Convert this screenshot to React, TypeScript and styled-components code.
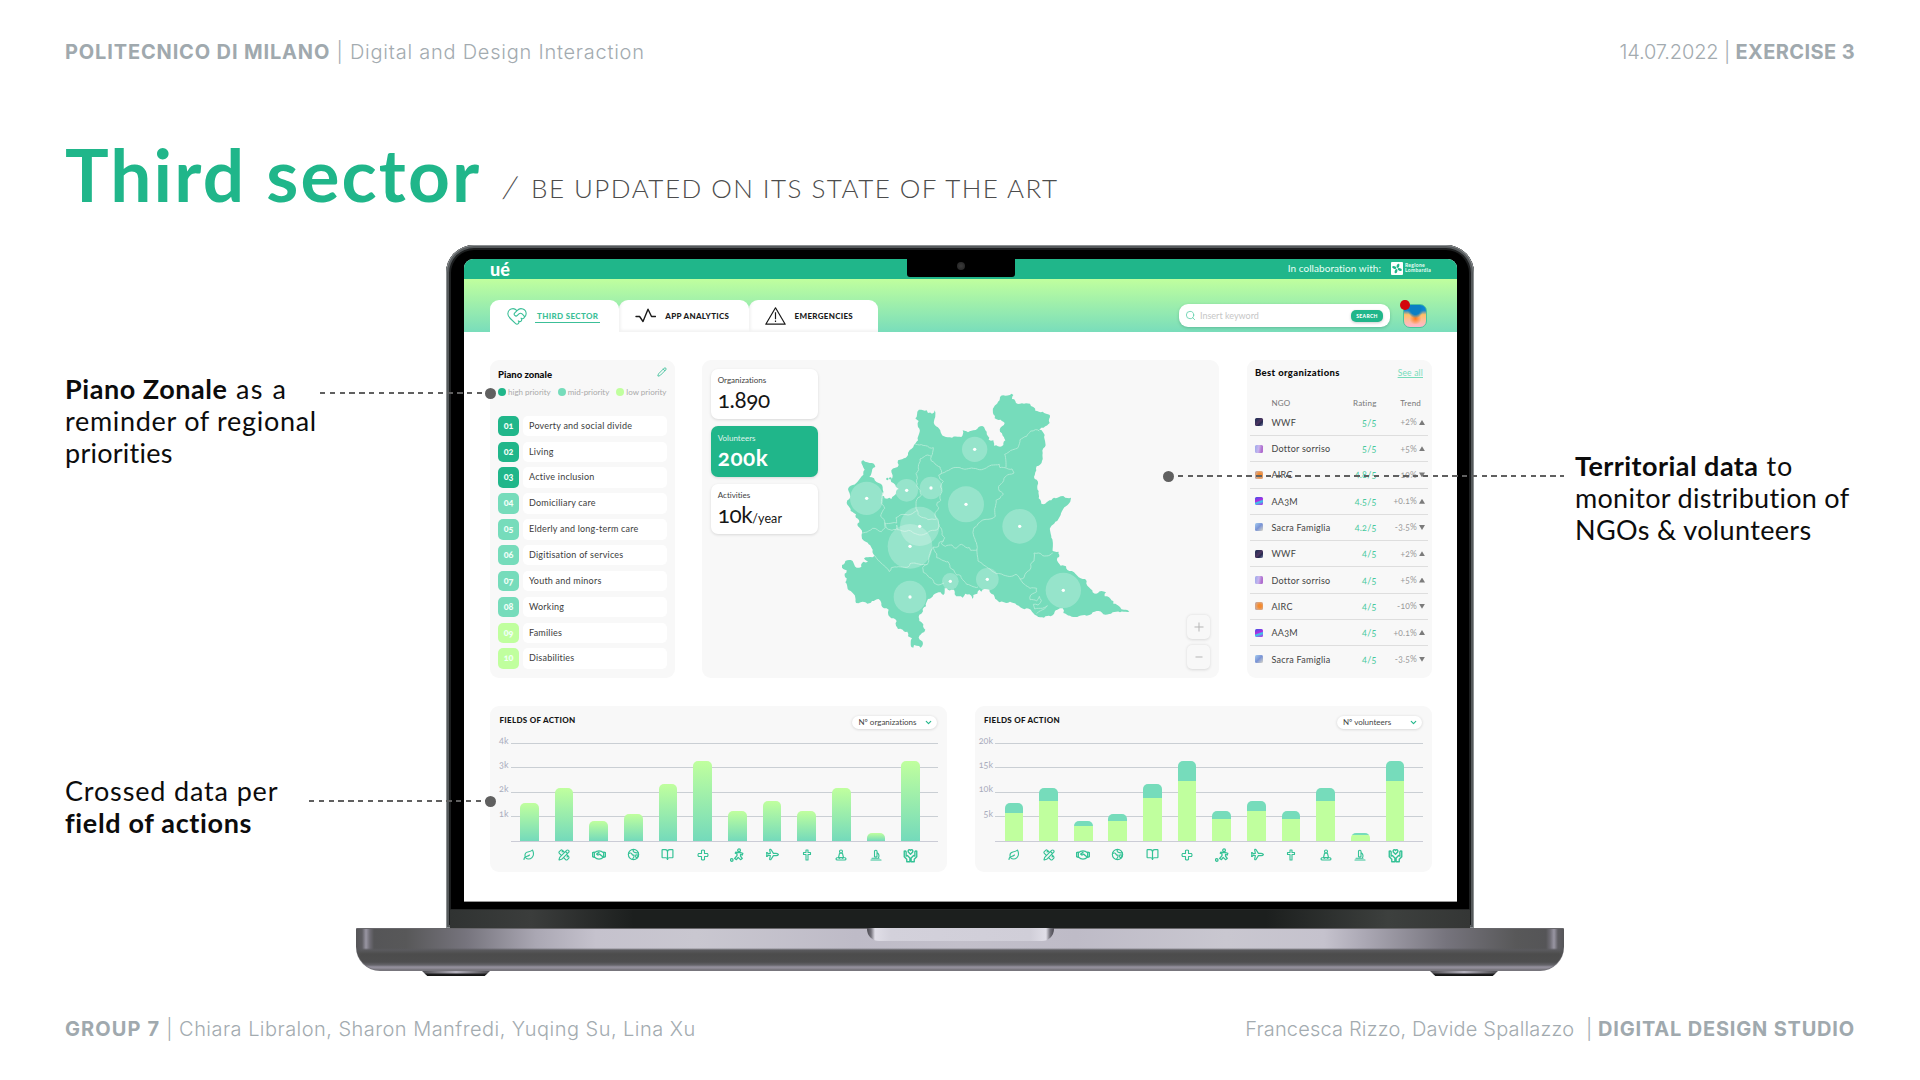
import React from "react";
import styled, { createGlobalStyle, css } from "styled-components";
import { HeartHandshake, Leaf, PencilRuler, BookOpen, Plane, Pencil, Search, ChevronDown } from "lucide-react";

const green = "#20b68a";
const mint = "#76dcbb";
const lime = "#c0ff9e";

const Global = createGlobalStyle`
  * { box-sizing: border-box; }
  body { margin: 0; background: #fff; }
`;

const Slide = styled.main`
  position: relative;
  width: 1920px;
  height: 1080px;
  overflow: hidden;
  background: #fff;
  display: flex;
  flex-direction: column;
  font-family: Lato, "Liberation Sans", sans-serif;
  font-variant-numeric: oldstyle-nums;
  font-variant-ligatures: none;
  color: #111;
`;

const Meta = styled.div<{ $top: number }>`
  margin-top: ${(p) => p.$top}px;
  height: 30px;
  padding: 0 65px;
  display: flex;
  align-items: center;
  justify-content: space-between;
  font: 300 20px/30px Inter, "Liberation Sans", sans-serif;
  font-variant-numeric: lining-nums;
  color: #a3abb0;
  white-space: pre;
  b { font-weight: 700; color: #a0a9ae; }
`;

const T = styled.span<{ $ls: number }>`
  letter-spacing: ${(p) => p.$ls}px;
  white-space: pre;
`;

const Heading = styled.div`
  margin-top: 57px;
  height: 100px;
  display: flex;
  align-items: baseline;
  padding-left: 65px;
  white-space: nowrap;
`;

const Title = styled.h1`
  margin: 0;
  width: 438px;
  font-size: 73px;
  line-height: 100px;
  font-weight: 700;
  letter-spacing: 2.15px;
  color: ${green};
`;

const Subtitle = styled.span`
  padding-bottom: 11px;
  align-self: flex-end;
  line-height: 50px;
  font-size: 26px;
  font-weight: 300;
  letter-spacing: 1.47px;
  color: #4c4c4c;
`;

const Slash = styled.span`
  display: inline-block;
  width: 27px;
  margin-left: 1px;
  font-size: 30px;
  line-height: 30px;
  transform: skewX(-12deg);
`;

const Stage = styled.section`
  margin-top: 21px;
  height: 732px;
  display: grid;
  grid-template-columns: 356px 1208px 356px;
`;

const Notes = styled.aside<{ $left: number; $top: number }>`
  padding: ${(p) => p.$top}px 0 0 ${(p) => p.$left}px;
  display: flex;
  flex-direction: column;
`;

const Note = styled.p<{ $gap?: number }>`
  margin: ${(p) => p.$gap ?? 0}px 0 0;
  font-size: 27px;
  line-height: 32px;
  color: #0c0c0c;
  white-space: nowrap;
  b { font-weight: 700; }
`;

/* ---------- laptop ---------- */

const Laptop = styled.div`
  display: flex;
  flex-direction: column;
  align-items: center;
`;

const Lid = styled.div`
  width: 1028px;
  height: 683px;
  border-radius: 28px 28px 0 0;
  padding: 14px 17px 0 18px;
  background: #000;
  box-shadow: inset 0 0 0 1px #8b8f91, inset 0 0 0 3px #55595b, inset 0 0 0 5px #1d1f20;
`;

const Screen = styled.div`
  height: 643px;
  border-radius: 9px 9px 0 0;
  overflow: hidden;
  background: #fff;
  border-bottom: 1px solid #999;
`;

const Chin = styled.div`
  margin: 7px -13px 0 -14px;
  height: 19px;
  background: linear-gradient(90deg, #303332, #3b3d3c 8%, #1c1f1e 18%, #1c1f1e 80%, #3d403e 92%, #343635);
  border-top: 1px solid #262828;
`;

const Base = styled.div`
  width: 1208px;
  height: 43px;
  border-radius: 1px 1px 24px 24px;
  display: flex;
  justify-content: center;
  box-shadow: inset 0 1px 0 #68676b, inset 0 -1px 0 #77757c;
  background:
    linear-gradient(90deg, #555558 0, transparent 5px, transparent 1203px, #555558 1208px),
    linear-gradient(180deg, transparent 0, transparent 20px, #5a5a5e 22px, #4c4c4c 26px, #4e4e4f 34px, #65646a 37px, #96929f 39px, #85828c 41px, #5b5a5d 43px),
    linear-gradient(90deg, #5a5a5e 0, #5e5d62 6px, #9996a3 10px, #6d6b73 14px, #555557 18px, #585859 50px, #76747d 110px, #aaa7b3 180px, #c5c2cd 240px, #c9c7d0 340px, #bebbc7 500px, #c2bfca 604px, #bebbc7 720px, #c9c7d0 870px, #c5c2cd 968px, #aaa7b3 1010px, #76747d 1090px, #585859 1160px, #555557 1190px, #6d6b73 1194px, #9996a3 1198px, #5e5d62 1202px);
`;

const Groove = styled.div`
  width: 187px;
  height: 13px;
  border-radius: 0 0 12px 12px;
  background: linear-gradient(90deg, #4a4950 0, #73717a 4px, #e0dee7 8px, #d3d1db 24px, #d0ced8 163px, #e0dee7 179px, #73717a 183px, #4a4950 187px);
`;

const Feet = styled.div`
  width: 1076px;
  display: flex;
  justify-content: space-between;
`;

const Foot = styled.i`
  width: 68px;
  height: 5px;
  clip-path: polygon(0 0, 100% 0, 92% 100%, 8% 100%);
  background:
    linear-gradient(180deg, transparent 35%, #1e1e1f 65%, #111 100%),
    linear-gradient(90deg, #4b4a4e, #b6b3bf 50%, #4b4a4e);
`;

/* ---------- app header ---------- */

const TopBar = styled.header`
  height: 20px;
  padding: 0 25px 0 26px;
  display: grid;
  grid-template-columns: 1fr 108px 1fr;
  background: ${green};
  color: #e9fff7;
`;

const Logo = styled.span`
  height: 20px;
  font-size: 18px;
  line-height: 20px;
  font-weight: 900;
  color: #fff;
`;

const CameraHousing = styled.div`
  height: 18px;
  border-radius: 0 0 3px 3px;
  background: #000;
  display: flex;
  justify-content: center;
  padding-top: 3px;
  i { width: 8px; height: 8px; border-radius: 50%; background: radial-gradient(#3b3b3b, #202020); }
`;

const Partner = styled.div`
  display: flex;
  justify-content: flex-end;
  align-items: center;
  height: 17px;
  font-size: 10px;
  letter-spacing: 0.05px;
  svg { margin: 1px 2px 0 10px; }
`;

const PartnerName = styled.span`
  width: 27px;
  font-size: 5px;
  line-height: 5px;
  font-weight: 700;
  letter-spacing: 0.3px;
`;

const Band = styled.nav`
  height: 53px;
  padding: 0 30px 0 26px;
  display: flex;
  align-items: flex-end;
  background: linear-gradient(180deg, ${lime}, #79ddbb);
`;

const Tab = styled.div<{ $active?: boolean }>`
  width: 129.3px;
  height: 32.5px;
  border-radius: 9px 9px 0 0;
  background: #fff;
  box-shadow: ${(p) => (p.$active ? "none" : "inset 2px -2px 3px rgba(0,0,0,.05)")};
  padding: 1px 0 0 16px;
  display: flex;
  align-items: center;
  gap: 7px;
  font-size: 8px;
  font-weight: 900;
  color: ${(p) => (p.$active ? "#3cbf98" : "#1b1b1b")};
`;

const TabLabel = styled.span<{ $active?: boolean; $ls: number }>`
  padding: 3px 2px 1px;
  line-height: 9px;
  white-space: nowrap;
  letter-spacing: ${(p) => p.$ls}px;
  border-bottom: 1.6px solid ${(p) => (p.$active ? "#3cbf98" : "transparent")};
`;

const SearchBox = styled.div`
  margin: 0 13px 5px auto;
  width: 211px;
  height: 23px;
  border-radius: 9px;
  background: #fff;
  box-shadow: 0 1px 3px rgba(0, 80, 60, 0.25);
  display: flex;
  align-items: center;
  padding: 0 7px 0 6px;
  gap: 4px;
  font-size: 9px;
  color: #c6c6c6;
`;

const SearchButton = styled.span`
  margin-left: auto;
  width: 32px;
  height: 12px;
  border-radius: 5px;
  background: ${green};
  color: #fff;
  font-size: 5px;
  line-height: 12px;
  font-weight: 900;
  letter-spacing: 0.35px;
  text-align: center;
  box-shadow: 0 1px 3px rgba(0, 0, 0, 0.2);
`;

const Avatar = styled.div`
  position: relative;
  width: 24px;
  height: 24px;
  margin-bottom: 4px;
  border-radius: 7px;
  border: 1.3px solid #4cc49c;
  background:
    radial-gradient(ellipse 7px 8px at 52% 18%, #0b7fc4 70%, transparent 115%),
    radial-gradient(ellipse 6px 6px at 52% 62%, #ff7a1c, transparent),
    linear-gradient(180deg, #0d84d4 24%, #ffc065 44%, #ffbd98 68%, #ffb7cf 100%);
  &::before {
    content: "";
    position: absolute;
    left: -4px;
    top: -5px;
    width: 9.5px;
    height: 10px;
    border-radius: 50%;
    background: #d3060b;
  }
`;

/* ---------- panels ---------- */

const Content = styled.div`
  padding: 27.5px 25.5px 0 26px;
  display: flex;
  flex-direction: column;
  gap: 28px;
`;

const TopRow = styled.div`
  display: grid;
  grid-template-columns: 184.5px 517px 184.5px;
  justify-content: space-between;
  height: 318px;
`;

const BottomRow = styled.div`
  display: grid;
  grid-template-columns: 457px 457px;
  justify-content: space-between;
  height: 166px;
`;

const Panel = styled.section`
  border-radius: 9px;
  background: #f8f8f8;
`;

const PlanPanel = styled(Panel)`
  padding: 8.5px 8px 0 8px;
`;

const PanelHead = styled.div<{ $inset?: number }>`
  height: 12px;
  padding: 0 ${(p) => p.$inset ?? 0}px;
  display: flex;
  justify-content: space-between;
  align-items: center;
  font-size: 9.5px;
  font-weight: 900;
  color: #0c0c0c;
  svg { margin-top: -4px; }
`;

const Legend = styled.div`
  margin-top: 6px;
  height: 12px;
  display: flex;
  justify-content: space-between;
  align-items: center;
  font-size: 8px;
  color: #a9a9a9;
`;

const LegendItem = styled.span<{ $c: string }>`
  display: flex;
  align-items: center;
  gap: 2px;
  white-space: nowrap;
  &::before { content: ""; width: 8px; height: 8px; border-radius: 50%; background: ${(p) => p.$c}; }
`;

const PlanList = styled.ol`
  list-style: none;
  margin: 17.8px 0 0;
  padding: 0;
  display: grid;
  grid-auto-rows: 20.35px;
  row-gap: 5.5px;
`;

const PlanRow = styled.li`
  display: grid;
  grid-template-columns: 21px 143.5px;
  column-gap: 4px;
`;

const PlanNo = styled.span<{ $c: string }>`
  border-radius: 5px;
  background: ${(p) => p.$c};
  color: #f0fff8;
  font-size: 9px;
  font-weight: 900;
  line-height: 19px;
  text-align: center;
`;

const PlanName = styled.span`
  border-radius: 5px;
  background: #fff;
  padding-left: 6px;
  font-size: 9px;
  line-height: 20.4px;
  letter-spacing: 0.22px;
  color: #3c3c3c;
`;

const MapPanel = styled(Panel)`
  display: flex;
  padding: 9px;
`;

const Stats = styled.div`
  width: 106.5px;
  display: flex;
  flex-direction: column;
  gap: 7px;
`;

const Stat = styled.div<{ $on?: boolean }>`
  height: 50.6px;
  border-radius: 7px;
  padding: 6.5px 0 0 6.5px;
  background: ${(p) => (p.$on ? green : "#fff")};
  color: ${(p) => (p.$on ? "#fff" : "#151515")};
  box-shadow: 0 1px 3px rgba(0, 0, 0, 0.13);
`;

const StatLabel = styled.div`
  font-size: 8px;
  line-height: 10px;
  opacity: 0.85;
`;

const StatValue = styled.div<{ $on?: boolean }>`
  font-size: 22.5px;
  line-height: 26px;
  margin-top: 2px;
  font-weight: ${(p) => (p.$on ? 700 : 400)};
  letter-spacing: ${(p) => (p.$on ? 0.5 : -0.4)}px;
  small { font-size: 12.5px; letter-spacing: 0.1px; }
`;

const MapHolder = styled.div`
  margin: 2px 0 0 2px;
  width: 340px;
  height: 298px;
`;

const ZoomButtons = styled.div`
  margin: auto 0 0 auto;
  display: flex;
  flex-direction: column;
  gap: 6.5px;
`;

const ZoomButton = styled.span`
  width: 23.5px;
  height: 23.5px;
  border-radius: 5px;
  background: #f8f8f8;
  box-shadow: 0 0.5px 3px rgba(0, 0, 0, 0.13);
  display: grid;
  place-items: center;
`;

const RankPanel = styled(Panel)`
  padding: 7.3px 3.5px 0 3px;
`;

const SeeAll = styled.span`
  padding-top: 1px;
  font-size: 8.5px;
  font-weight: 400;
  letter-spacing: 0.2px;
  color: ${mint};
  text-decoration: underline;
`;

const rankCols = css`
  display: grid;
  grid-template-columns: 16.5px 74px 31px 40.5px 10px;
  align-items: center;
  padding-left: 5px;
`;

const RankHead = styled.div`
  ${rankCols}
  height: 12px;
  margin: 18.5px 0 0.5px;
  font-size: 8px;
  letter-spacing: 0.2px;
  color: #777;
`;

const RankRow = styled.div`
  ${rankCols}
  height: 26.27px;
  font-size: 9px;
  color: #444;
  border-bottom: 1px solid #dedede;
  &:last-child { border-bottom: none; }
`;

const Num = styled.span<{ $c: string; $s: number; $shift?: number }>`
  text-align: right;
  font-size: ${(p) => p.$s}px;
  color: ${(p) => p.$c};
  letter-spacing: 0.2px;
  white-space: nowrap;
  margin-right: ${(p) => -(p.$shift ?? 0)}px;
`;

const OrgMark = styled.i<{ $bg: string }>`
  width: 8px;
  height: 8px;
  border-radius: 1.5px;
  background: ${(p) => p.$bg};
`;

const Arrow = styled.i<{ $up: boolean }>`
  justify-self: center;
  width: 6px;
  height: 5px;
  background: #7b7b7b;
  clip-path: ${(p) => (p.$up ? "polygon(50% 0, 100% 100%, 0 100%)" : "polygon(0 0, 100% 0, 50% 100%)")};
`;

/* ---------- charts ---------- */

const ChartPanel = styled(Panel)`
  padding: 9px 8px 0 0;
`;

const ChartHead = styled.div`
  height: 15px;
  display: flex;
  justify-content: space-between;
  padding: 0 2px 0 9.5px;
  font-size: 8px;
  line-height: 10px;
  font-weight: 900;
  letter-spacing: 0.3px;
  color: #161616;
`;

const Dropdown = styled.span`
  margin-top: 1px;
  width: 85px;
  height: 13.5px;
  border-radius: 7px;
  background: #fff;
  box-shadow: 0 0.5px 3px rgba(0, 0, 0, 0.16);
  display: flex;
  align-items: center;
  justify-content: space-between;
  padding: 0 4px 0 6.5px;
  font-size: 8px;
  font-weight: 400;
  letter-spacing: 0;
  color: #444;
`;

const Plot = styled.div`
  margin-top: 13px;
  height: 99px;
  display: grid;
  grid-template-columns: 18.5px 427.5px;
  column-gap: 2px;
`;

const Ticks = styled.div`
  display: flex;
  flex-direction: column;
  margin-top: -7px;
  text-align: right;
  font-size: 9px;
  line-height: 10px;
  color: #a9acbd;
  span { height: 24.4px; }
`;

const Bars = styled.div`
  height: 99px;
  padding: 0 18px 0 9.5px;
  display: flex;
  align-items: flex-end;
  justify-content: space-between;
  border-bottom: 1.4px solid #cbccd6;
  background: repeating-linear-gradient(180deg, #cacfd4 0, #cacfd4 1.1px, transparent 1.1px, transparent 24.4px);
`;

const Bar = styled.div<{ $h: number; $stacked: boolean }>`
  width: 18.7px;
  height: ${(p) => p.$h}px;
  border-radius: 5px 5px 0 0;
  background: ${(p) =>
    p.$stacked
      ? `linear-gradient(180deg, ${mint} 25%, ${lime} 25%)`
      : `linear-gradient(180deg, ${lime}, #74dabb)`};
`;

const IconRow = styled.div`
  margin-left: 30px;
  width: 400px;
  height: 26px;
  display: flex;
  justify-content: space-between;
  align-items: center;
  color: #35c296;
`;

const IconCell = styled.span`
  width: 18.7px;
  height: 14px;
  display: grid;
  place-items: center;
`;

/* ---------- callouts over the laptop ---------- */

const Callout = styled.div<{ $x: number; $y: number; $w: number; $end: "left" | "right" }>`
  position: absolute;
  left: ${(p) => p.$x}px;
  top: ${(p) => p.$y}px;
  width: ${(p) => p.$w}px;
  height: 2px;
  background: repeating-linear-gradient(90deg, #606060 0, #606060 5.4px, transparent 5.4px, transparent 9.8px);
  &::after {
    content: "";
    position: absolute;
    top: -4.5px;
    ${(p) => p.$end}: -5.5px;
    width: 11px;
    height: 11px;
    border-radius: 50%;
    background: #606060;
  }
`;

/* ---------- drawings ---------- */

const outline =
  "575,68 580,72 576,84 586,90 594,99 612,98 630,98 640,108 646,119 668,122 684,130 690,138 689,156 676,166 664,170 658,176 668,182 674,192 676,216 670,232 668,246 666,270 656,284 648,292 646,304 642,318 650,326 652,344 656,360 656,382 664,398 680,394 694,388 702,380 722,376 736,380 753,380 752,386 738,406 722,432 706,452 692,468 694,500 698,540 716,542 718,552 712,560 714,574 722,584 738,586 748,600 762,604 772,614 788,624 800,630 802,644 812,654 818,664 834,666 844,660 858,664 854,676 872,684 880,690 880,698 900,708 912,716 928,722 900,724 878,724 850,730 836,720 818,724 800,734 772,738 750,734 730,726 728,712 720,712 712,716 704,722 692,736 672,740 650,734 636,722 620,712 606,712 590,702 570,692 552,694 538,694 530,686 524,678 514,668 508,656 494,654 484,662 478,656 472,668 460,672 456,684 448,670 436,668 428,680 416,676 404,670 402,656 394,656 384,656 374,652 370,672 362,664 340,672 324,684 318,706 308,714 304,728 296,738 298,750 310,760 316,776 306,786 296,800 308,812 302,830 290,824 282,822 280,830 274,828 276,802 264,796 262,782 248,776 234,774 228,764 230,750 214,742 204,726 206,716 192,712 184,696 176,684 156,690 142,698 122,694 108,696 106,680 92,660 82,648 76,634 80,622 74,608 80,598 66,590 66,582 76,570 98,570 110,590 124,588 130,572 144,572 132,562 150,558 164,554 158,536 146,520 130,508 126,486 122,474 112,462 118,454 108,440 108,430 92,420 80,396 88,384 90,372 84,354 98,342 130,312 134,296 128,284 124,276 130,268 142,274 156,276 166,288 156,300 148,318 162,322 176,336 188,348 190,362 186,374 194,382 208,380 214,384 222,374 228,362 236,354 228,348 220,336 212,326 218,314 214,298 226,290 236,282 234,268 252,262 264,252 274,234 282,222 294,208 298,186 294,168 296,150 286,142 292,122 304,116 320,118 324,126 336,128 344,118 346,132 342,150 348,166 362,184 372,196 396,200 424,198 428,178 444,184 460,178 476,168 492,168 500,182 504,196 506,206 520,208 522,224 534,226 550,222 556,208 548,194 540,182 546,166 554,156 542,146 524,142 520,130 522,108 534,92 540,78 556,74 575,68";

const borders = [
  "286,220 304,221 316,224 328,230 340,230 338,244 334,256 334,270 346,280 360,288 364,298 362,310 356,312 360,324 370,332 362,348 366,362 360,374 362,388 352,394 350,402 356,410 346,424 348,440 354,446 356,460 362,470 366,490 374,500 370,510",
  "334,256 322,252 300,264 298,276 296,296 288,308 292,322 290,334 290,344 300,358 304,372 294,380 288,398 288,412 292,418",
  "362,308 380,300 396,292 420,290 440,294 460,292 478,296 500,290 520,282 538,280 540,290 560,292 576,294 582,306 568,310 552,322 548,334 536,346 538,360 550,370 540,382 528,388 526,408 526,436 510,444 492,446 474,458 462,470 460,490 466,510 472,530 474,570 490,582 510,594 530,608 550,612 574,616 588,610 600,624 612,620 618,606 630,596 632,580 642,570 642,546 655,546 668,554 690,552 698,546",
  "558,290 554,250 568,242 592,232 600,206 620,196 632,180 646,176 658,180",
  "370,510 364,518 376,526 396,522 408,532 424,520 436,528 448,530 452,538 472,536",
  "370,510 358,514 356,526 340,528 350,548 350,560 374,570 384,572 390,590 402,598 410,612 422,614 428,626 440,640 464,648 474,648",
  "340,528 330,548 326,564 322,580 308,590 310,604 322,612 334,622 342,636 354,642 372,636",
  "190,362 186,380 184,398 194,412 182,436 192,446 194,456 216,456 230,456 228,440 240,432 264,432 282,424 292,418 294,430 310,440 324,446 336,444 350,444",
  "126,486 146,480 158,472 172,476 184,482 196,470 194,456",
  "196,456 200,472 216,478 228,476 230,462 232,476 248,480 266,478 280,486 304,492 322,486 338,478 354,474 358,460",
  "164,554 180,572 200,592 208,602 214,590 230,588 264,588 270,578 290,578 310,580 322,580",
  "600,624 614,640 630,652 650,652 650,662 638,668 632,672 630,686 650,690 658,676 664,688 654,702 640,700 644,714 662,712 682,704 668,716 656,722 650,728",
];

const bubbles = [
  [464, 235, 38], [140, 382, 50], [260, 358, 34], [333, 351, 34], [438, 400, 54], [299, 466, 59],
  [270, 526, 67], [599, 466, 52], [270, 678, 49], [391, 631, 25], [502, 625, 34], [730, 658, 53],
];

/* Adds small alternating teeth between points so that borders look surveyed. */
const rough = (points: string, amp: number) => {
  const p = points.split(" ").map((s) => s.split(",").map(Number));
  const out: string[] = [];
  p.forEach(([x, y], i) => {
    out.push(`${x},${y}`);
    const n = p[i + 1];
    if (!n) return;
    const len = Math.hypot(n[0] - x, n[1] - y);
    const steps = Math.floor(len / 5);
    for (let k = 1; k < steps; k++) {
      const t = k / steps;
      const j = Math.sin((i * 7 + k) * 12.9) * amp;
      out.push(`${(x + (n[0] - x) * t - ((n[1] - y) / len) * j).toFixed(1)},${(y + (n[1] - y) * t + ((n[0] - x) / len) * j).toFixed(1)}`);
    }
  });
  return out.join(" ");
};

const Lombardy = () => (
  <svg width="340" height="310" viewBox="0 0 1020 930">
    <polygon points={rough(outline, 3)} fill={mint} />
    <circle cx="202" cy="324" r="3.5" fill={mint} />
    <circle cx="211" cy="322" r="3.5" fill={mint} />
    {borders.map((b) => (
      <polyline key={b} points={rough(b, 1.8)} fill="none" stroke="#b4ebd7" strokeWidth="2.6" strokeLinejoin="round" />
    ))}
    {bubbles.map(([x, y, r]) => (
      <circle key={`${x}-${y}`} cx={x} cy={y} r={r} fill="#fff" fillOpacity="0.24" />
    ))}
    {bubbles.map(([x, y]) => (
      <circle key={`${x}-${y}`} cx={x} cy={y} r="5" fill="#fff" />
    ))}
  </svg>
);

const PulseIcon = () => (
  <svg width="21" height="18" viewBox="0 0 21 18" fill="none" stroke="#1b1b1b" strokeWidth="1.4" strokeLinejoin="round" strokeLinecap="round">
    <path d="M1 9.500h3.600L8 14.500 13 2.200 16.500 9.500H20.500" />
  </svg>
);

const WarningIcon = () => (
  <svg width="21" height="18" viewBox="0 0 21 18" fill="none" stroke="#1b1b1b" strokeWidth="1.2" strokeLinejoin="round">
    <path d="M10.500 0.800 20.200 17.200H0.800z" />
    <path d="M10.500 5.200v7M10.500 13.400v1.600" />
  </svg>
);

const Rose = () => (
  <svg width="12" height="13" viewBox="0 0 12 13">
    <rect width="12" height="13" rx="1" fill="#fff" />
    <g fill={green} transform="rotate(20 6 6.5)">
      <ellipse cx="6" cy="3.6" rx="1.3" ry="2.2" />
      <ellipse cx="6" cy="9.4" rx="1.3" ry="2.2" />
      <ellipse cx="3.1" cy="6.5" rx="2.2" ry="1.3" />
      <ellipse cx="8.9" cy="6.5" rx="2.2" ry="1.3" />
    </g>
  </svg>
);

const Line = ({ children, size = 12 }: { children: React.ReactNode; size?: number }) => (
  <svg width={size} height={size} viewBox="0 0 24 24" fill="none" stroke="currentColor" strokeWidth="2.2" strokeLinejoin="round" strokeLinecap="round">
    {children}
  </svg>
);

const Turned = styled.span`
  display: grid;
  transform: rotate(45deg);
`;

const iconProps = { size: 12, strokeWidth: 2.2 };

const fieldIcons = [
  <Leaf {...iconProps} />,
  <PencilRuler {...iconProps} />,
  <Line size={14}>
    <path d="M1 8l3-1v9l-3-1zM23 8l-3-1v9l3-1z" />
    <path d="M4 8Q12 2 20 8M4 15.500q8 7 16 0M12 7.500l-4 3q2 3 5 0l5 4" />
  </Line>,
  <Line size={13}>
    <circle cx="12" cy="12" r="9.500" />
    <path d="M3 10q5-2 6 1t4 2q1 4-3 8M12 3q-2 4 2 5t7 1M16 13q4-1 5 1l-3 5q-3-2-2-6z" />
  </Line>,
  <BookOpen {...iconProps} size={13} />,
  <Line><path d="M9 3q3-2 6 0v6h6q2 3 0 6h-6v6q-3 2-6 0v-6H3q-2-3 0-6h6z" /></Line>,
  <Line size={14}>
    <circle cx="15.500" cy="4" r="2.400" />
    <path d="M10 7l4 1h4l4 1-1 3-3-1v3l3 4-3 2-4-4-3 4-3-2 4-5v-3l-3-1z" />
    <circle cx="3" cy="20.500" r="2.200" />
  </Line>,
  <Turned><Plane {...iconProps} size={13} /></Turned>,
  <Line><path d="M10 2h4v5h5v4h-5v11h-4V11H5V7h5z" /></Line>,
  <Line>
    <circle cx="12" cy="5" r="3" />
    <path d="M9 9q3-2 6 0l2 8H7zM7 17q-5 0-5 3 0 2 3 2h14q3 0 3-2 0-3-5-3M8 19l4-2 4 2" />
  </Line>,
  <Line><path d="M9 4q3-3 5 0v11q-3 2-5 0zM14 7q6 4 3 11M2 22h20M4 18.500h14" /></Line>,
  <Line size={15}>
    <path d="M12 10 8.500 6.500q-1-3 1.500-4 1.500 0 2 1.500.500-1.500 2-1.500 2.500 1 1.500 4z" />
    <path d="M2 5v9l4 4v4h5v-6l-4-4-2 1V6q-1-2-3-1zM22 5v9l-4 4v4h-5v-6l4-4 2 1V6q1-2 3-1z" />
  </Line>,
];

/* ---------- data ---------- */

const plan = [
  "Poverty and social divide", "Living", "Active inclusion", "Domiciliary care", "Elderly and long-term care",
  "Digitisation of services", "Youth and minors", "Working", "Families", "Disabilities",
];

const marks: Record<string, string> = {
  WWF: "linear-gradient(135deg, #2b3158 20%, #4d3560 50%, #252a50 70%, #8c93b8)",
  "Dottor sorriso": "linear-gradient(100deg, #9aa8ea, #c9b6ee 45%, #b06fcf 80%)",
  AIRC: "radial-gradient(circle at 60% 50%, #f58a2e 25%, #e0a578 60%, #a9a4c0)",
  AA3M: "linear-gradient(160deg, #3a55e8, #b22be0 45%, #35d0e8 60%, #c51be8)",
  "Sacra Famiglia": "linear-gradient(135deg, #a6cdf0, #7a94d6 50%, #dcd8c8)",
};

const ranking: [string, string, string, boolean][] = [
  ["WWF", "5/5", "+2%", true],
  ["Dottor sorriso", "5/5", "+5%", true],
  ["AIRC", "4.8/5", "-10%", false],
  ["AA3M", "4.5/5", "+0.1%", true],
  ["Sacra Famiglia", "4.2/5", "-3.5%", false],
  ["WWF", "4/5", "+2%", true],
  ["Dottor sorriso", "4/5", "+5%", true],
  ["AIRC", "4/5", "-10%", false],
  ["AA3M", "4/5", "+0.1%", true],
  ["Sacra Famiglia", "4/5", "-3.5%", false],
];

const heights = [37.5, 52.5, 19.5, 26.5, 57, 79.5, 29.5, 40, 29.5, 52.5, 7.5, 79.5];

const Chart = ({ unit, ticks, stacked }: { unit: string; ticks: string[]; stacked: boolean }) => (
  <ChartPanel>
    <ChartHead>
      FIELDS OF ACTION
      <Dropdown>
        {unit}
        <ChevronDown size={9} strokeWidth={3} color={green} />
      </Dropdown>
    </ChartHead>
    <Plot>
      <Ticks>{ticks.map((t) => <span key={t}>{t}</span>)}</Ticks>
      <Bars>{heights.map((h, i) => <Bar key={i} $h={h} $stacked={stacked} />)}</Bars>
    </Plot>
    <IconRow>{fieldIcons.map((icon, i) => <IconCell key={i}>{icon}</IconCell>)}</IconRow>
  </ChartPanel>
);

export default function App() {
  return (
    <Slide>
      <Global />
      <Meta $top={37}>
        <span><T as="b" $ls={0.85}>POLITECNICO DI MILANO</T><T $ls={0.76}> | Digital and Design Interaction</T></span>
        <span><T $ls={-0.15}>14.07.2022 | </T><T as="b" $ls={0.4}>EXERCISE 3</T></span>
      </Meta>
      <Heading>
        <Title>Third sector</Title>
        <Subtitle><Slash>/</Slash>BE UPDATED ON ITS STATE OF THE ART</Subtitle>
      </Heading>
      <Stage>
        <Notes $left={65} $top={128}>
          <Note>
            <T as="b" $ls={0.55}>Piano Zonale</T><T $ls={1.5}> as a</T><br />
            <T $ls={0.7}>reminder of regional</T><br />
            <T $ls={0.25}>priorities</T>
          </Note>
          <Note $gap={306}>
            <T $ls={0.85}>Crossed data per</T><br />
            <T as="b" $ls={0.65}>field of actions</T>
          </Note>
        </Notes>
        <Laptop>
          <Lid>
            <Screen>
              <TopBar>
                <Logo>ué</Logo>
                <CameraHousing><i /></CameraHousing>
                <Partner>
                  In collaboration with:
                  <Rose />
                  <PartnerName>Regione<br />Lombardia</PartnerName>
                </Partner>
              </TopBar>
              <Band>
                <Tab $active>
                  <HeartHandshake size={22} strokeWidth={1.2} />
                  <TabLabel $active $ls={0.35}>THIRD SECTOR</TabLabel>
                </Tab>
                <Tab><PulseIcon /><TabLabel $ls={0.3}>APP ANALYTICS</TabLabel></Tab>
                <Tab><WarningIcon /><TabLabel $ls={0.3}>EMERGENCIES</TabLabel></Tab>
                <SearchBox>
                  <Search size={11} strokeWidth={1.8} color="#5fd0ab" />
                  Insert keyword
                  <SearchButton>SEARCH</SearchButton>
                </SearchBox>
                <Avatar />
              </Band>
              <Content>
                <TopRow>
                  <PlanPanel>
                    <PanelHead>Piano zonale <Pencil size={10} strokeWidth={1.8} color={green} /></PanelHead>
                    <Legend>
                      <LegendItem $c={green}>high priority</LegendItem>
                      <LegendItem $c={mint}>mid-priority</LegendItem>
                      <LegendItem $c={lime}>low priority</LegendItem>
                    </Legend>
                    <PlanList>
                      {plan.map((name, i) => (
                        <PlanRow key={name}>
                          <PlanNo $c={i < 3 ? green : i < 8 ? mint : lime}>{String(i + 1).padStart(2, "0")}</PlanNo>
                          <PlanName>{name}</PlanName>
                        </PlanRow>
                      ))}
                    </PlanList>
                  </PlanPanel>
                  <MapPanel>
                    <Stats>
                      <Stat><StatLabel>Organizations</StatLabel><StatValue>1.890</StatValue></Stat>
                      <Stat $on><StatLabel>Volunteers</StatLabel><StatValue $on>200k</StatValue></Stat>
                      <Stat><StatLabel>Activities</StatLabel><StatValue>10k<small>/year</small></StatValue></Stat>
                    </Stats>
                    <MapHolder><Lombardy /></MapHolder>
                    <ZoomButtons>
                      <ZoomButton><svg width="10" height="10" viewBox="0 0 10 10" stroke="#b5b5b5" strokeWidth="1"><path d="M0.500 5h9M5 .5v9" /></svg></ZoomButton>
                      <ZoomButton><svg width="10" height="10" viewBox="0 0 10 10" stroke="#b5b5b5" strokeWidth="1"><path d="M1.500 5h7" /></svg></ZoomButton>
                    </ZoomButtons>
                  </MapPanel>
                  <RankPanel>
                    <PanelHead $inset={5}><T $ls={0.35}>Best organizations</T> <SeeAll>See all</SeeAll></PanelHead>
                    <RankHead><span /><span>NGO</span><Num $c="#777" $s={8}>Rating</Num><Num $c="#777" $s={8} $shift={4}>Trend</Num><span /></RankHead>
                    {ranking.map(([name, rating, trend, up], i) => (
                      <RankRow key={i}>
                        <OrgMark $bg={marks[name]} />
                        <T $ls={0.25}>{name}</T>
                        <Num $c="#47c99d" $s={9}>{rating}</Num>
                        <Num $c="#999" $s={8.5}>{trend}</Num>
                        <Arrow $up={up} />
                      </RankRow>
                    ))}
                  </RankPanel>
                </TopRow>
                <BottomRow>
                  <Chart unit="Nº organizations" ticks={["4k", "3k", "2k", "1k"]} stacked={false} />
                  <Chart unit="Nº volunteers" ticks={["20k", "15k", "10k", "5k"]} stacked />
                </BottomRow>
              </Content>
            </Screen>
            <Chin />
          </Lid>
          <Base><Groove /></Base>
          <Feet><Foot /><Foot /></Feet>
        </Laptop>
        <Notes $left={11} $top={205}>
          <Note>
            <T as="b" $ls={0.45}>Territorial data</T><T $ls={1}> to</T><br />
            <T $ls={0.3}>monitor distribution of</T><br />
            <T $ls={0.35}>NGOs & volunteers</T>
          </Note>
        </Notes>
      </Stage>
      <Meta $top={37}>
        <span><T as="b" $ls={1.1}>GROUP 7</T><T $ls={0.46}> | Chiara Libralon, Sharon Manfredi, Yuqing Su, Lina Xu</T></span>
        <span><T $ls={0.17}>Francesca Rizzo, Davide Spallazzo  | </T><T as="b" $ls={0.8}>DIGITAL DESIGN STUDIO</T></span>
      </Meta>
      <Callout $x={320} $y={392} $w={170} $end="right" />
      <Callout $x={309} $y={800} $w={181} $end="right" />
      <Callout $x={1168} $y={475} $w={396} $end="left" />
    </Slide>
  );
}
